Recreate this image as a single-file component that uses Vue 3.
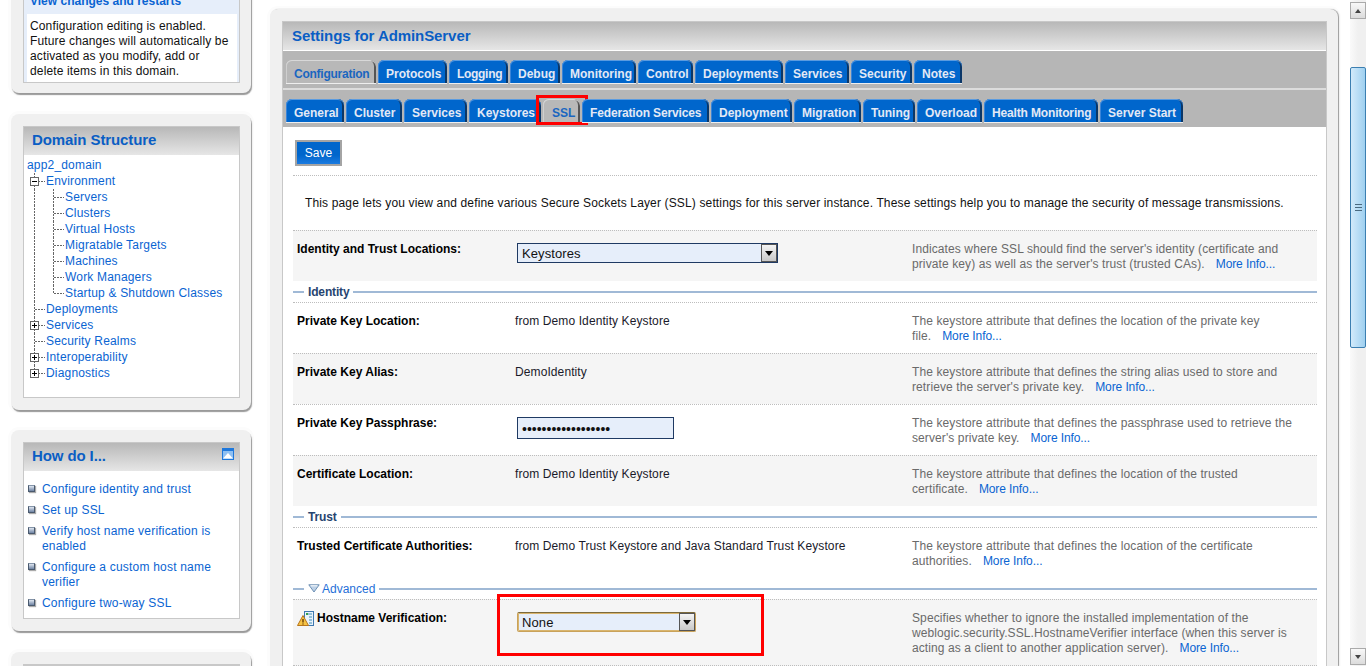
<script setup>
const tabs1 = [
  { t:'Configuration', w:90, ls:-.25, on:true },{ t:'Protocols', w:69 },{ t:'Logging', w:59, ls:-.3 },{ t:'Debug', w:50 },
  { t:'Monitoring', w:74 },{ t:'Control', w:55 },{ t:'Deployments', w:88 },{ t:'Services', w:64 },{ t:'Security', w:61 },{ t:'Notes', w:48 }
]
const tabs2 = [
  { t:'General', w:58 },{ t:'Cluster', w:56 },{ t:'Services', w:63 },{ t:'Keystores', w:72 },{ t:'SSL', w:37, on:true, ssl:true },
  { t:'Federation Services', w:127, ls:-.15 },{ t:'Deployment', w:81 },{ t:'Migration', w:67 },{ t:'Tuning', w:52 },{ t:'Overload', w:65 },
  { t:'Health Monitoring', w:114, ls:-.15 },{ t:'Server Start', w:83 }
]
const tree = [
  { t:'app2_domain', l:0 },
  { t:'Environment', l:1, box:'minus' },
  { t:'Servers', l:2 },{ t:'Clusters', l:2 },{ t:'Virtual Hosts', l:2 },{ t:'Migratable Targets', l:2 },
  { t:'Machines', l:2 },{ t:'Work Managers', l:2 },{ t:'Startup & Shutdown Classes', l:2, last:true },
  { t:'Deployments', l:1 },{ t:'Services', l:1, box:'plus' },{ t:'Security Realms', l:1 },
  { t:'Interoperability', l:1, box:'plus' },{ t:'Diagnostics', l:1, box:'plus', end:true }
]
const how = ['Configure identity and trust','Set up SSL',['Verify host name verification is','enabled'],['Configure a custom host name','verifier'],'Configure two-way SSL']
const blocks = [
  { kind:'row', grey:true, label:'Identity and Trust Locations:', select:'Keystores', help:["Indicates where SSL should find the server's identity (certificate and","private key) as well as the server's trust (trusted CAs)."] },
  { kind:'legend', text:'Identity' },
  { kind:'row', label:'Private Key Location:', value:'from Demo Identity Keystore', help:['The keystore attribute that defines the location of the private key','file.'] },
  { kind:'row', grey:true, label:'Private Key Alias:', value:'DemoIdentity', help:['The keystore attribute that defines the string alias used to store and',"retrieve the server's private key."] },
  { kind:'row', label:'Private Key Passphrase:', pass:true, help:['The keystore attribute that defines the passphrase used to retrieve the',"server's private key."] },
  { kind:'row', grey:true, label:'Certificate Location:', value:'from Demo Identity Keystore', help:['The keystore attribute that defines the location of the trusted','certificate.'] },
  { kind:'legend', text:'Trust' },
  { kind:'row', label:'Trusted Certificate Authorities:', value:'from Demo Trust Keystore and Java Standard Trust Keystore', help:['The keystore attribute that defines the location of the certificate','authorities.'] },
  { kind:'legend', text:'Advanced', adv:true },
  { kind:'row', grey:true, warn:true, last:true, label:'Hostname Verification:', gold:'None', help:['Specifies whether to ignore the installed implementation of the','weblogic.security.SSL.HostnameVerifier interface (when this server is','acting as a client to another application server).'] }
]
const tabStyle = (tab) => ({ width: tab.w + 'px', letterSpacing: (tab.ls || 0) + 'px' })
</script>

<template>
  <div class="page">
    <aside class="side">
      <section class="panel first">
        <div class="box changes">
          <a class="view">View changes and restarts</a>
          <p class="note">Configuration editing is enabled.<br>Future changes will automatically be<br>activated as you modify, add or<br>delete items in this domain.</p>
        </div>
      </section>

      <section class="panel">
        <div class="box">
          <h2 class="phead">Domain Structure</h2>
          <ul class="tree">
            <li v-for="n in tree" :key="n.t" class="node" :class="['lv' + n.l, { end: n.end }]">
              <i v-if="n.l > 0" class="v1" :class="{ half: n.end }"></i>
              <i v-if="n.l > 0" class="h1" :class="{ deep: n.l === 2 }"></i>
              <i v-if="n.l === 2" class="v2" :class="{ half: n.last }"></i>
              <svg v-if="n.box" class="tbox" width="9" height="9" viewBox="0 0 9 9">
                <rect x=".5" y=".5" width="8" height="8" fill="#fff" stroke="#666"/>
                <path :d="n.box === 'plus' ? 'M2 4.5h5M4.5 2v5' : 'M2 4.5h5'" stroke="#000" fill="none"/>
              </svg>
              <a class="tlink">{{ n.t }}</a>
            </li>
          </ul>
        </div>
      </section>

      <section class="panel third">
        <div class="box">
          <h2 class="phead">How do I...
            <svg class="collapse" width="12" height="12" viewBox="0 0 12 12">
              <rect x=".5" y=".5" width="11" height="11" fill="#8fc0f2" stroke="#1e78dc"/>
              <rect x="1" y="1" width="10" height="2" fill="#1e78dc"/>
              <path d="M1 10.5 6 5 11 10.5z" fill="#fff"/>
            </svg>
          </h2>
          <ul class="how">
            <li v-for="(h, i) in how" :key="i" class="howitem">
              <i class="bullet"></i>
              <a v-if="typeof h === 'string'">{{ h }}</a>
              <a v-else>{{ h[0] }}<br>{{ h[1] }}</a>
            </li>
          </ul>
        </div>
      </section>

      <section class="panel stub"><div class="box"></div></section>
    </aside>

    <main class="main">
      <div class="mainbox">
        <h1 class="mhead">Settings for AdminServer</h1>
        <nav class="band">
          <span v-for="tab in tabs1" :key="tab.t" class="tab" :class="{ on: tab.on }" :style="tabStyle(tab)">{{ tab.t }}</span>
        </nav>
        <nav class="band second">
          <span v-for="tab in tabs2" :key="tab.t" class="tab" :class="{ on: tab.on, ssl: tab.ssl }" :style="tabStyle(tab)">{{ tab.t }}<i v-if="tab.ssl" class="redbox sslred"></i></span>
        </nav>
        <div class="content">
          <div class="bar"><button class="save" type="button">Save</button></div>
          <p class="intro">This page lets you view and define various Secure Sockets Layer (SSL) settings for this server instance. These settings help you to manage the security of message transmissions.</p>

          <template v-for="(b, i) in blocks" :key="i">
            <div v-if="b.kind === 'legend'" class="legend">
              <i class="lline short"></i>
              <svg v-if="b.adv" class="advarrow" width="12" height="9" viewBox="0 0 12 9">
                <path d="M.8.8h10.4L6 8z" fill="#bcd0e6" stroke="#6d8fb3"/>
                <path d="M2.6 1.8h6.8" stroke="#fff"/>
              </svg>
              <span :class="b.adv ? 'ltext adv' : 'ltext'">{{ b.text }}</span>
              <i class="lline"></i>
            </div>
            <div v-else class="row" :class="{ grey: b.grey, last: b.last }">
              <div class="label">
                <svg v-if="b.warn" class="warn" width="17" height="16" viewBox="0 0 17 16">
                  <rect x="7.5" y=".5" width="9" height="14" fill="#e9f2fb" stroke="#3f78b0"/>
                  <path d="M9 3h6M12 6h3M12 9h3M12 12h3" stroke="#3f8fb8"/>
                  <rect x="9" y="2" width="2" height="2" fill="#37a04a"/>
                  <path d="M6 4.5 11.5 14.5H.5z" fill="#f6c344" stroke="#b8761c" stroke-linejoin="round"/>
                  <path d="M6 8v3.4M6 12.4v1" stroke="#5a3200" stroke-width="1.3"/>
                </svg>
                {{ b.label }}
              </div>
              <div class="value">
                <template v-if="b.value">{{ b.value }}</template>
                <div v-if="b.select" class="sel">
                  <span class="seltext">{{ b.select }}</span>
                  <span class="arrow"></span>
                </div>
                <div v-if="b.pass" class="pass">••••••••••••••••••</div>
                <div v-if="b.gold" class="sel gold">
                  <span class="seltext">{{ b.gold }}</span>
                  <span class="arrow"></span>
                </div>
                <i v-if="b.gold" class="redbox goldred"></i>
              </div>
              <div class="help">
                <template v-for="(l, j) in b.help" :key="j">{{ l }}<br v-if="j < b.help.length - 1"></template>
                <a class="more">More Info...</a>
              </div>
            </div>
          </template>
        </div>
      </div>
    </main>

    <div class="scroll">
      <span class="sbtn"><i class="up"></i></span>
      <span class="thumb"><i class="grip"></i></span>
      <span class="sbtn down"><i class="dn"></i></span>
    </div>
  </div>
</template>

<style>
html, body { margin: 0; overflow: hidden; background: #fff; }
</style>

<style scoped>
.page { display: flex; align-items: flex-start; width: 1366px; height: 666px; overflow: hidden; background: #fff; font: 12px/15px "Liberation Sans", Arial, sans-serif; color: #000; }
a { color: #0a64d2; }
ul { list-style: none; margin: 0; padding: 0; }
h1, h2, p { margin: 0; }

.side { flex: 0 0 240px; width: 240px; margin: 0 19px 0 11px; display: flex; flex-direction: column; gap: 21px; }
.panel { background: #f0f0f0; border-radius: 8px; padding: 12px 11px 12px 12px; box-shadow: 1px 2px 1px #9a9a9a, 0 0 0 3px #fcfcfc; }
.first { margin-top: -25px; padding-bottom: 10px; }
.third { margin-top: -1px; }
.box { background: #fff; border: 1px solid #c8c8c8; }
.changes { background: #e6eefa; padding: 0 2px 0 3px; }
.view { display: block; height: 26px; line-height: 26px; padding-left: 3px; font-weight: bold; }
.note { background: #fff; padding: 5px 0 3px 3px; color: #111; letter-spacing: .14px; white-space: nowrap; }
.phead { position: relative; height: 28px; padding-left: 8px; font-size: 15px; line-height: 26px; font-weight: bold; letter-spacing: -.1px; color: #0a5ec4; background: linear-gradient(#b8b8b8, #e6e6e6); }
.collapse { position: absolute; right: 5px; top: 5px; }

.tree { padding: 2px 0 16px; }
.node { position: relative; height: 16px; line-height: 16px; white-space: nowrap; letter-spacing: .18px; }
.lv0 { padding-left: 3px; }
.lv1 { padding-left: 22px; }
.lv2 { padding-left: 41px; }
.v1, .v2, .h1 { position: absolute; display: block; }
.v1 { left: 10px; top: 0; width: 1px; height: 16px; background: repeating-linear-gradient(#666 0 2px, transparent 2px 3px); }
.v1.half { height: 8px; }
.v2 { left: 29px; top: 0; width: 1px; height: 16px; background: repeating-linear-gradient(#666 0 2px, transparent 2px 3px); }
.v2.half { height: 8px; }
.h1 { left: 11px; top: 8px; width: 10px; height: 1px; background: repeating-linear-gradient(90deg, #666 0 2px, transparent 2px 3px); }
.h1.deep { left: 30px; }
.tbox { position: absolute; left: 6px; top: 4px; }

.how { padding: 11px 0 1px; letter-spacing: .2px; }
.howitem { display: flex; align-items: flex-start; padding: 0 0 6px 4px; }
.bullet { flex: none; width: 5px; height: 5px; margin: 3px 7px 0 0; border: 1px solid #4a5a6e; border-top-color: #8494a8; background: linear-gradient(#dfe6f0, #6f84a4); box-shadow: 1px 1px 1px #aaa; }
.stub { height: 40px; }

.main { flex: 0 0 1068px; margin-top: 9px; background: #f0f0f0; border-radius: 8px 8px 0 0; padding: 12px 11px 0 12px; box-shadow: 1px 0 1px #9a9a9a, 0 0 0 3px #fcfcfc; box-sizing: border-box; }
.mainbox { background: #fff; border: 1px solid #c8c8c8; border-width: 1px 1px 0; }
.mhead { height: 28px; padding-left: 9px; font-size: 15px; line-height: 27px; font-weight: bold; letter-spacing: -.08px; color: #0a5ec4; background: linear-gradient(#b8b8b8, #e6e6e6); border-bottom: 1px solid #fff; }
.band { display: flex; gap: 2px; height: 28px; padding: 9px 0 0 3px; background: #b6b6b6; border-bottom: 2px solid #dcdcdc; }
.band.second { border-bottom: 0; }
.tab { position: relative; flex: none; height: 23px; box-sizing: border-box; padding-left: 8px; line-height: 28px; font-weight: bold; white-space: nowrap; color: #e3e9f5; background: #0066cc; border-radius: 6px 6px 0 0; box-shadow: inset 0 1px 0 #5a9be0, inset 1px 0 0 #3a84d8, inset -2px 0 0 #0b3768, 0 1px 0 #eee; }
.second .tab { line-height: 29px; }
.tab.on { color: #1a66c0; background: #b8b8b8; box-shadow: inset 0 1px 0 #d8d8d8, inset 1px 0 0 #cfcfcf, inset -2px 0 0 #555, 0 1px 0 #eee; }
.second .ssl { padding-left: 9px; }
.redbox { position: absolute; display: block; border: 3px solid #f00; box-sizing: border-box; pointer-events: none; }
.sslred { left: -7px; top: -4px; width: 52px; height: 30px; }

.content { padding: 0 9px 0 10px; }
.bar { padding: 13px 0 9px 2px; }
.save { display: block; width: 47px; height: 26px; padding: 0; border: 2px solid #a4a4a4; background: linear-gradient(#0066cc 60%, #1b7be0); color: #fff; font: 12px "Liberation Sans", Arial, sans-serif; }
.intro { height: 55px; box-sizing: border-box; border-top: 1px dotted #bdbdbd; padding: 20px 0 0 12px; white-space: nowrap; color: #111; letter-spacing: .146px; }
.row { display: grid; grid-template-columns: 222px 397px 405px; border-top: 1px dotted #bdbdbd; padding-bottom: 9px; white-space: nowrap; }
.row.grey { background: #f5f5f5; }
.row.last { border-bottom: 1px dotted #bdbdbd; }
.label { padding: 11px 0 0 4px; font-weight: bold; display: flex; align-items: flex-start; }
.warn { flex: none; margin: 0 3px 0 0; }
.value { position: relative; padding-top: 11px; color: #1a1a2a; letter-spacing: .1px; }
.help { padding-top: 11px; color: #6a6a6a; letter-spacing: .1px; }
.more { margin-left: 11px; letter-spacing: -.1px; }
.sel { display: flex; width: 261px; height: 20px; margin: 1px 0 0 2px; box-sizing: border-box; border: 1px solid #1f3a63; background: #e6eefa; font-size: 13px; line-height: 20px; color: #111; }
.seltext { flex: 1; padding-left: 4px; }
.arrow { position: relative; flex: none; width: 16px; border: 1px solid #555; background: linear-gradient(#f4f4f4, #c8c8c8); box-sizing: border-box; }
.arrow::after { content: ""; position: absolute; left: 3px; top: 6px; border: 4px solid transparent; border-top: 5px solid #000; border-bottom: 0; }
.gold { width: 179px; border-color: #c9a25a; border-top-color: #7c6a3c; border-radius: 2px; box-shadow: inset 0 0 0 1px #d9b56e; }
.redbox.goldred { left: -18px; top: -6px; width: 267px; height: 62px; }
.pass { width: 157px; height: 22px; margin: 1px 0 0 2px; box-sizing: border-box; border: 1px solid #1f3a63; background: #e6eefa; padding-left: 4px; font-size: 14px; line-height: 22px; overflow: hidden; color: #111; letter-spacing: 0; }

.legend { display: flex; align-items: center; height: 21px; }
.lline { flex: 1; height: 2px; background: #a0b9d6; }
.lline.short { flex: 0 0 11px; }
.ltext { margin: 0 4px; padding-top: 1px; font-weight: bold; letter-spacing: -.15px; color: #274570; }
.ltext.adv { font-weight: normal; letter-spacing: 0; color: #1f6fd8; margin-left: 2px; }
.advarrow { margin-left: 4px; }

.scroll { flex: 0 0 16px; margin-left: 12px; height: 666px; padding: 2px 0 1px; box-sizing: border-box; display: flex; flex-direction: column; background: linear-gradient(90deg, #fafafa, #f0f0f0 50%); }
.sbtn { display: flex; align-items: center; justify-content: center; flex: none; height: 15px; border: 1px solid #aaa; background: linear-gradient(#f8f8f8, #dcdcdc); }
.sbtn.down { margin-top: auto; }
.up, .dn { display: block; border: 3px solid transparent; }
.up { border-bottom: 4px solid #444; border-top: 0; }
.dn { border-top: 4px solid #444; border-bottom: 0; }
.thumb { display: flex; align-items: center; justify-content: center; height: 281px; margin-top: 48px; box-sizing: border-box; border: 1px solid #3c7fb1; border-radius: 2px; background: linear-gradient(90deg, #d2eafa, #9fd0f0); }
.grip { display: block; width: 7px; height: 7px; background: repeating-linear-gradient(#4a6a80 0 1px, transparent 1px 3px); }
</style>
